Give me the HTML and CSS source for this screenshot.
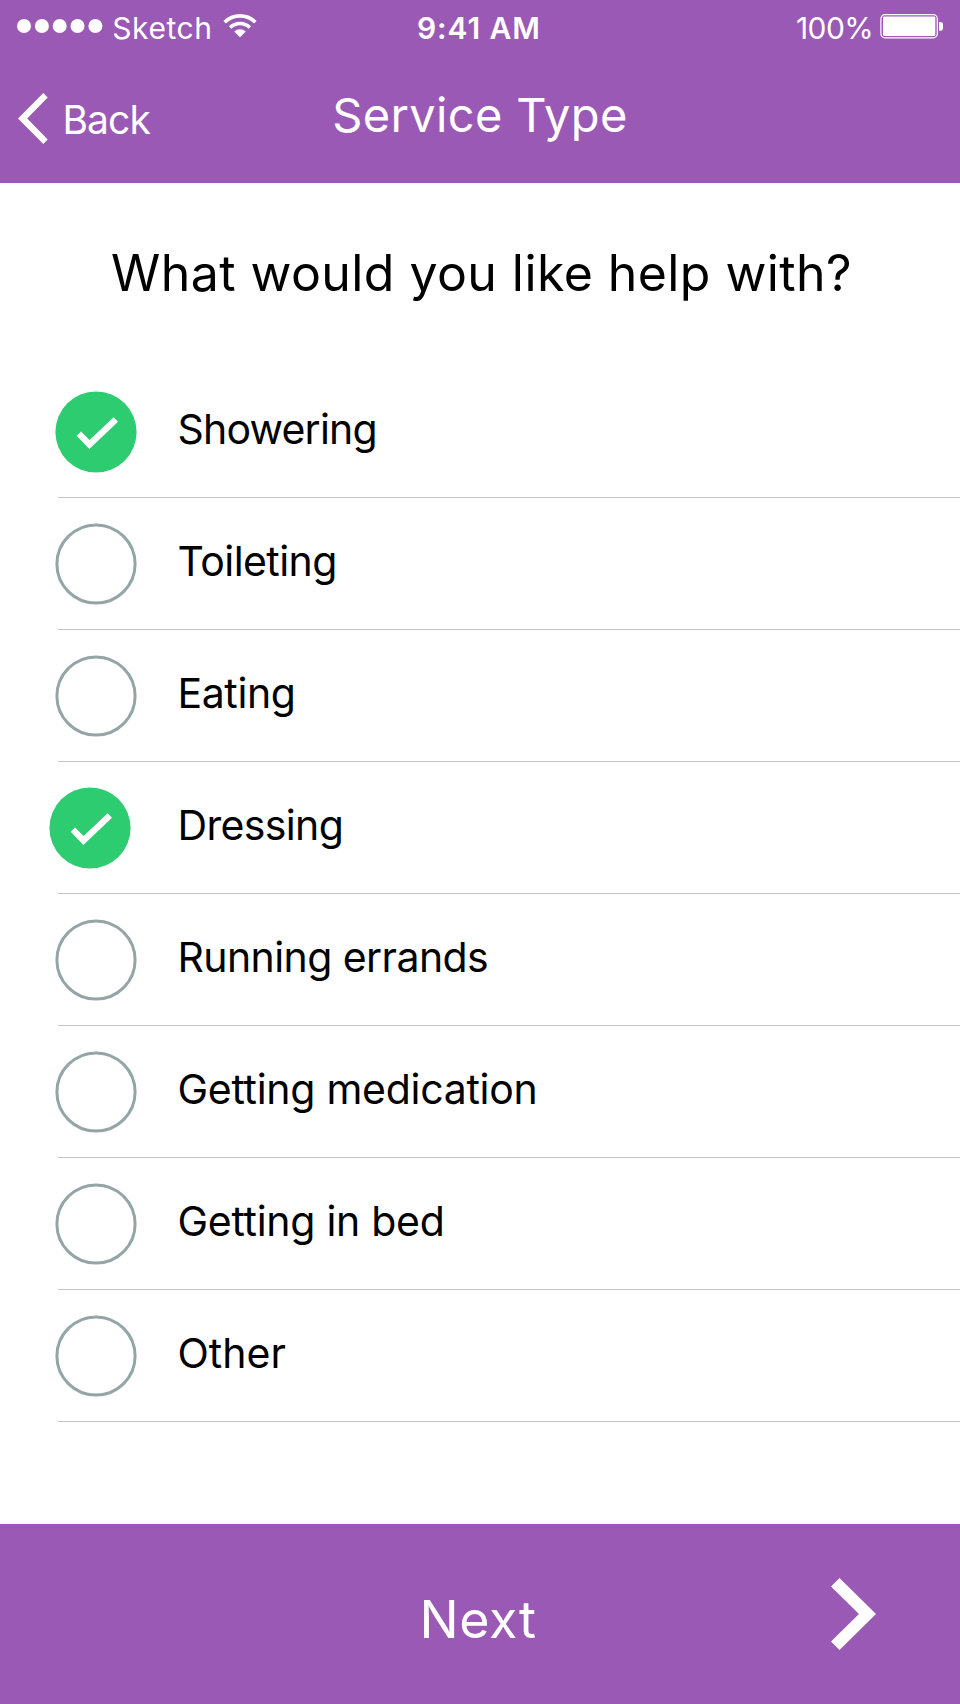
FILE: index.html
```
<!DOCTYPE html>
<html lang="en">
<head>
<meta charset="utf-8">
<title>Service Type</title>
<link rel="stylesheet" href="styles.css">
</head>
<body>
<div class="screen">
  <header class="header">
    <div class="status">
      <div class="carrier">
        <svg class="signal" width="86" height="14" viewBox="0 0 86 14" fill="#fff"><circle cx="7" cy="7" r="7"/><circle cx="24.9" cy="7" r="7"/><circle cx="42.7" cy="7" r="7"/><circle cx="60.5" cy="7" r="7"/><circle cx="78.4" cy="7" r="7"/></svg>
        <span class="carrier-name">Sketch</span>
        <svg class="wifi" width="34" height="24" viewBox="0 0 34 24" fill="none" stroke="#fff" stroke-width="3.6"><path d="M1.7 8.2A21.7 21.7 0 0 1 32.3 8.2M7.1 13.6A14 14 0 0 1 26.9 13.6"/><path d="M17 23.2L11.2 17.5A8.3 8.3 0 0 1 22.8 17.5Z" fill="#fff" stroke="none"/></svg>
      </div>
      <div class="time">9:41 AM</div>
      <div class="power">
        <span class="percent">100%</span>
        <svg class="battery" width="63" height="25" viewBox="0 0 63 25"><rect x=".9" y=".7" width="56.4" height="23.1" rx="4" fill="none" stroke="#fff" stroke-width="1.2"/><rect x="3" y="2.4" width="52.3" height="19.6" rx="1.2" fill="#fff"/><path d="M59 8h1.5Q63 8 63 10.5v3.5Q63 16.7 60.5 16.7H59Z" fill="#fff"/></svg>
      </div>
    </div>
    <nav class="nav">
      <a class="back">
        <svg class="back-icon" width="30" height="51" viewBox="0 0 30 51"><path d="M0 25.5L25.3 0L29.7 4.5L9.2 25.5L29.7 46.5L25.3 51Z" fill="#fff"/></svg>
        <span>Back</span>
      </a>
      <h1 class="title">Service Type</h1>
    </nav>
  </header>
  <main class="main">
    <h2 class="question">What would you like help with?</h2>
    <ul class="list">
      <li class="row"><svg class="mark" viewBox="0 0 82 82"><circle cx="41" cy="41" r="40.6" fill="#2ecc71"/><path d="M21.7 44.8L26 40.6L34.6 49L58.6 26.3L63 30.8L34.3 58Z" fill="#fff"/></svg><span class="t-showering">Showering</span></li>
      <li class="row"><svg class="mark" viewBox="0 0 82 82"><circle cx="41" cy="41" r="39.1" fill="none" stroke="#95a5a6" stroke-width="3"/></svg><span class="t-toileting">Toileting</span></li>
      <li class="row"><svg class="mark" viewBox="0 0 82 82"><circle cx="41" cy="41" r="39.1" fill="none" stroke="#95a5a6" stroke-width="3"/></svg><span class="t-eating">Eating</span></li>
      <li class="row"><svg class="mark mark-shifted" viewBox="0 0 82 82"><circle cx="41" cy="41" r="40.6" fill="#2ecc71"/><path d="M21.7 44.8L26 40.6L34.6 49L58.6 26.3L63 30.8L34.3 58Z" fill="#fff"/></svg><span class="t-dressing">Dressing</span></li>
      <li class="row"><svg class="mark" viewBox="0 0 82 82"><circle cx="41" cy="41" r="39.1" fill="none" stroke="#95a5a6" stroke-width="3"/></svg><span class="t-errands">Running errands</span></li>
      <li class="row"><svg class="mark" viewBox="0 0 82 82"><circle cx="41" cy="41" r="39.1" fill="none" stroke="#95a5a6" stroke-width="3"/></svg><span class="t-getting">Getting medication</span></li>
      <li class="row"><svg class="mark" viewBox="0 0 82 82"><circle cx="41" cy="41" r="39.1" fill="none" stroke="#95a5a6" stroke-width="3"/></svg><span class="t-getting">Getting in bed</span></li>
      <li class="row"><svg class="mark" viewBox="0 0 82 82"><circle cx="41" cy="41" r="39.1" fill="none" stroke="#95a5a6" stroke-width="3"/></svg><span>Other</span></li>
    </ul>
  </main>
  <footer class="footer">
    <span class="next">Next</span>
    <svg class="next-icon" width="45" height="72" viewBox="0 0 45 72"><path d="M0 8.5L8.5 0L45 36L8.5 72L0 63.5L28 36Z" fill="#fff"/></svg>
  </footer>
</div>
</body>
</html>
```
FILE: styles.css
```
* { box-sizing: border-box; }
body {
  margin: 0;
  font-family: Inter, "Liberation Sans", sans-serif;
  background: #fff;
  color: #000;
}
.screen {
  display: flex;
  flex-direction: column;
  width: 960px;
  height: 1704px;
  overflow: hidden;
}
.header {
  height: 183px;
  background: #9b59b6;
  color: #fff;
}
.status {
  display: grid;
  grid-template-columns: 417px 1fr auto;
  height: 56px;
  padding-right: 17px;
  font-size: 30px;
  line-height: 56px;
}
.carrier { display: flex; padding-left: 16.5px; }
.signal { margin: 19px 9.8px 0 0; }
.carrier-name { width: 98.4px; letter-spacing: .55px; }
.wifi { margin: 14px 0 0 12.5px; }
.time { font-weight: 600; letter-spacing: .9px; }
.power { display: flex; }
.percent { width: 84px; letter-spacing: -.6px; }
.battery { margin-top: 14px; }
.nav {
  display: grid;
  grid-template-columns: 332.3px 1fr;
  height: 127px;
}
.back {
  display: flex;
  padding-left: 18px;
  font-size: 39px;
  line-height: 127px;
  letter-spacing: -.9px;
}
.back-icon { margin: 37px 14.5px 0 0; }
.title {
  margin: 0;
  font-size: 47px;
  font-weight: 400;
  line-height: 118px;
  letter-spacing: .35px;
}
.main { flex: 1; }
.question {
  height: 183px;
  margin: 0;
  padding-left: 111px;
  font-size: 50px;
  font-weight: 400;
  line-height: 181px;
  letter-spacing: .43px;
  white-space: nowrap;
}
.list {
  margin: 0 0 0 58px;
  padding: 0;
  list-style: none;
}
.row {
  display: flex;
  height: 132px;
  border-bottom: 1px solid #c4c4c6;
  font-size: 41px;
  line-height: 126px;
}
.mark {
  width: 82px;
  height: 82px;
  margin: 25px 40.5px 0 -3px;
}
.mark-shifted { margin: 25px 46.5px 0 -9px; }
.t-showering { letter-spacing: -.8px; }
.t-toileting { letter-spacing: -.55px; }
.t-eating { letter-spacing: -.4px; }
.t-dressing { letter-spacing: -.65px; }
.t-errands { letter-spacing: -.58px; }
.t-getting { letter-spacing: -.28px; }
.footer {
  display: flex;
  justify-content: space-between;
  height: 180px;
  padding: 0 84px 0 419.6px;
  background: #9b59b6;
  color: #fff;
}
.next {
  padding-top: 11px;
  font-size: 52px;
  line-height: 170px;
  letter-spacing: .6px;
}
.next-icon { margin-top: 54px; }
```
